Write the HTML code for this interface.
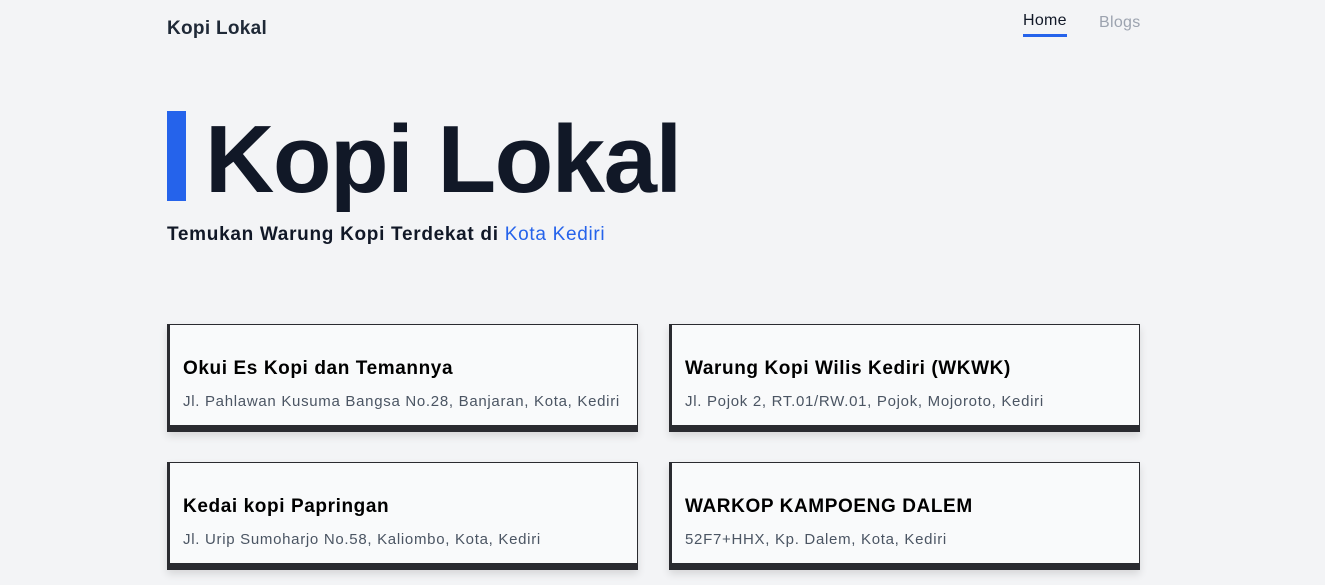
<!DOCTYPE html>
<html><head><meta charset="utf-8"><style>
*{margin:0;padding:0;box-sizing:border-box}
body{width:1325px;height:585px;overflow:hidden;background:#f3f4f6;font-family:"Liberation Sans",sans-serif;color:#111827;position:relative}
.logo{position:absolute;left:167px;top:18px;font-size:19px;font-weight:bold;color:#1f2937;letter-spacing:.3px}
.nav a{position:absolute;font-size:16px;text-decoration:none}
.home{left:1023px;top:12px;color:#111827;padding-bottom:4px;border-bottom:3px solid #2563eb;letter-spacing:.3px}
.blogs{left:1099px;top:14px;color:#9ca3af;letter-spacing:.3px}
.bar{position:absolute;left:167px;top:111px;width:19px;height:90px;background:#2563eb}
h1{position:absolute;left:205px;top:107px;font-size:96px;font-weight:bold;letter-spacing:-1.5px;color:#111827;line-height:1.1}
.sub{position:absolute;left:167px;top:224px;font-size:19px;font-weight:bold;color:#111827;letter-spacing:.7px}
.sub span{color:#2563eb;font-weight:normal}
.card{position:absolute;width:471px;height:108px;background:#f9fafb;border:1px solid #2a2b30;border-left:3px solid #2a2b30;border-bottom:7px solid #2a2b30;box-shadow:0 4px 8px rgba(0,0,0,.12)}
.card h3{position:absolute;left:13px;top:33px;font-size:19px;font-weight:bold;color:#000;letter-spacing:.6px}
.card p{position:absolute;left:13px;top:68px;font-size:15px;color:#4b5563;letter-spacing:.7px}
</style></head><body>
<div class="logo">Kopi Lokal</div>
<div class="nav"><a class="home">Home</a><a class="blogs">Blogs</a></div>
<div class="bar"></div>
<h1>Kopi Lokal</h1>
<div class="sub">Temukan Warung Kopi Terdekat di <span>Kota Kediri</span></div>
<div class="card" style="left:167px;top:324px"><h3>Okui Es Kopi dan Temannya</h3><p>Jl. Pahlawan Kusuma Bangsa No.28, Banjaran, Kota, Kediri</p></div>
<div class="card" style="left:669px;top:324px"><h3>Warung Kopi Wilis Kediri (WKWK)</h3><p>Jl. Pojok 2, RT.01/RW.01, Pojok, Mojoroto, Kediri</p></div>
<div class="card" style="left:167px;top:462px"><h3>Kedai kopi Papringan</h3><p>Jl. Urip Sumoharjo No.58, Kaliombo, Kota, Kediri</p></div>
<div class="card" style="left:669px;top:462px"><h3>WARKOP KAMPOENG DALEM</h3><p>52F7+HHX, Kp. Dalem, Kota, Kediri</p></div>
</body></html>
